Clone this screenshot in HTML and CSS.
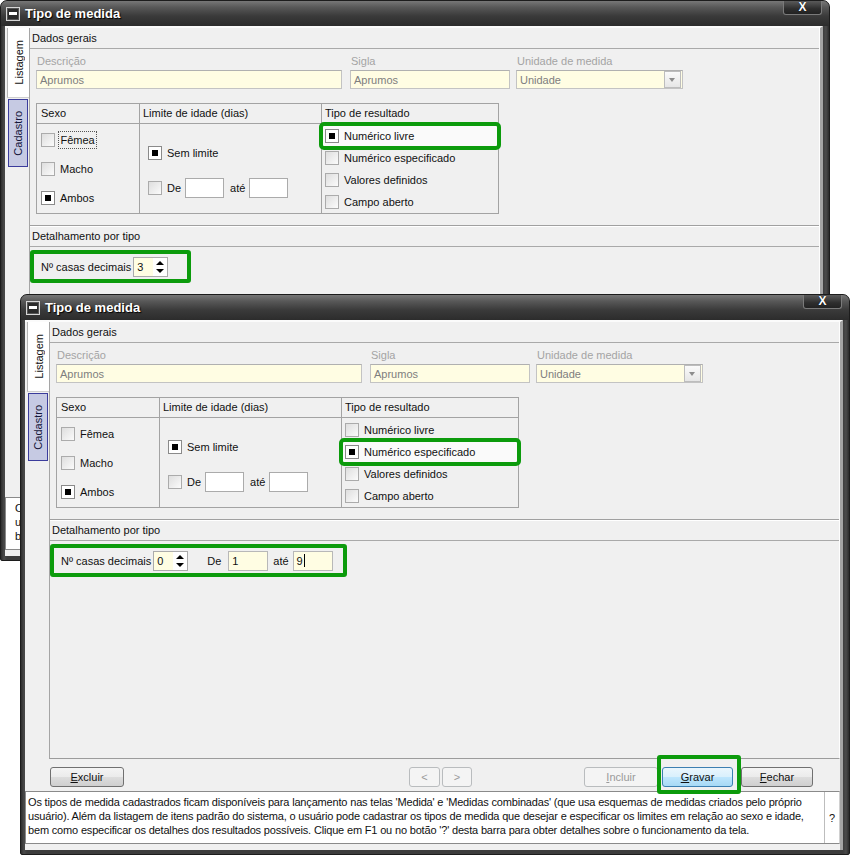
FILE: index.html
```html
<!DOCTYPE html>
<html lang="pt">
<head>
  <meta charset="UTF-8" />
  <title>Tipo de medida</title>
  <link rel="stylesheet" href="styles.css">
</head>
<body>
  <!-- janela de trás: Numérico livre -->
  <div class="win win--back">
    <div class="titlebar">
      <span class="sysbtn"></span>
      <span class="title">Tipo de medida</span>
      <span class="closebtn">X</span>
    </div>
    <div class="client">
      <div class="main">
        <div class="tabs">
          <div class="tab"><span>Listagem</span></div>
          <div class="tab tab--on"><span>Cadastro</span></div>
        </div>
        <div class="panel">
          <div class="sect-head">Dados gerais</div>
          <div class="fields">
            <div class="field field--desc"><span class="lbl">Descrição</span><span class="inp">Aprumos</span></div>
            <div class="field field--sigla"><span class="lbl">Sigla</span><span class="inp">Aprumos</span></div>
            <div class="field field--un"><span class="lbl">Unidade de medida</span><span class="inp">Unidade<i class="drop"></i></span></div>
          </div>
          <div class="group">
            <div class="gh">Sexo</div>
            <div class="gh">Limite de idade (dias)</div>
            <div class="gh gh--last">Tipo de resultado</div>
            <div class="gc gc--sexo">
              <div class="opt"><span class="cb"></span><span class="focus">Fêmea</span></div>
              <div class="opt"><span class="cb"></span>Macho</div>
              <div class="opt"><span class="cb cb--on"></span>Ambos</div>
            </div>
            <div class="gc gc--lim">
              <div class="opt"><span class="cb cb--on"></span>Sem limite</div>
              <div class="opt"><span class="cb"></span>De<span class="box"></span><span class="ate">até</span><span class="box"></span></div>
            </div>
            <div class="gc gc--tipo">
              <div class="opt mark-row"><span class="cb cb--on"></span>Numérico livre</div>
              <div class="opt"><span class="cb"></span>Numérico especificado</div>
              <div class="opt"><span class="cb"></span>Valores definidos</div>
              <div class="opt"><span class="cb"></span>Campo aberto</div>
            </div>
          </div>
          <div class="sect-head sect-head--sub">Detalhamento por tipo</div>
          <div class="detail">
            <div class="detail-box">
              <span>Nº casas decimais</span>
              <span class="spin"><span class="spin-val">3</span><span class="spin-btns"><i class="up"></i><i class="dn"></i></span></span>
            </div>
          </div>
        </div>
      </div>
      <div class="bar">
        <span class="btn btn--excluir"><u>E</u>xcluir</span>
        <span class="btn btn--nav btn--off">&lt;</span>
        <span class="btn btn--nav2 btn--off">&gt;</span>
        <span class="btn btn--incluir btn--off"><u>I</u>ncluir</span>
        <span class="btn btn--gravar btn--blue"><u>G</u>ravar</span>
        <span class="btn btn--fechar"><u>F</u>echar</span>
      </div>
      <div class="help">
        <p class="help-text">Os tipos de medida cadastrados ficam disponíveis para lançamento nas telas 'Medida' e 'Medidas combinadas' (que usa esquemas de medidas criados pelo próprio<br>usuário). Além da listagem de itens padrão do sistema, o usuário pode cadastrar os tipos de medida que desejar e especificar os limites em relação ao sexo e idade,<br>bem como especificar os detalhes dos resultados possíveis. Clique em F1 ou no botão '?' desta barra para obter detalhes sobre o funcionamento da tela.</p>
        <span class="help-q">?</span>
      </div>
    </div>
  </div>

  <!-- janela da frente: Numérico especificado -->
  <div class="win win--front">
    <div class="titlebar">
      <span class="sysbtn"></span>
      <span class="title">Tipo de medida</span>
      <span class="closebtn">X</span>
    </div>
    <div class="client">
      <div class="main">
        <div class="tabs">
          <div class="tab"><span>Listagem</span></div>
          <div class="tab tab--on"><span>Cadastro</span></div>
        </div>
        <div class="panel">
          <div class="sect-head">Dados gerais</div>
          <div class="fields">
            <div class="field field--desc"><span class="lbl">Descrição</span><span class="inp">Aprumos</span></div>
            <div class="field field--sigla"><span class="lbl">Sigla</span><span class="inp">Aprumos</span></div>
            <div class="field field--un"><span class="lbl">Unidade de medida</span><span class="inp">Unidade<i class="drop"></i></span></div>
          </div>
          <div class="group">
            <div class="gh">Sexo</div>
            <div class="gh">Limite de idade (dias)</div>
            <div class="gh gh--last">Tipo de resultado</div>
            <div class="gc gc--sexo">
              <div class="opt"><span class="cb"></span>Fêmea</div>
              <div class="opt"><span class="cb"></span>Macho</div>
              <div class="opt"><span class="cb cb--on"></span>Ambos</div>
            </div>
            <div class="gc gc--lim">
              <div class="opt"><span class="cb cb--on"></span>Sem limite</div>
              <div class="opt"><span class="cb"></span>De<span class="box"></span><span class="ate">até</span><span class="box"></span></div>
            </div>
            <div class="gc gc--tipo">
              <div class="opt"><span class="cb"></span>Numérico livre</div>
              <div class="opt mark-row"><span class="cb cb--on"></span>Numérico especificado</div>
              <div class="opt"><span class="cb"></span>Valores definidos</div>
              <div class="opt"><span class="cb"></span>Campo aberto</div>
            </div>
          </div>
          <div class="sect-head sect-head--sub">Detalhamento por tipo</div>
          <div class="detail">
            <div class="detail-box detail-box--range">
              <span>Nº casas decimais</span>
              <span class="spin"><span class="spin-val">0</span><span class="spin-btns"><i class="up"></i><i class="dn"></i></span></span>
              <span class="d-de">De</span>
              <span class="yel">1</span>
              <span class="d-ate">até</span>
              <span class="yel">9<i class="caret"></i></span>
            </div>
          </div>
        </div>
      </div>
      <div class="bar">
        <span class="btn btn--excluir"><u>E</u>xcluir</span>
        <span class="btn btn--nav btn--off">&lt;</span>
        <span class="btn btn--nav2 btn--off">&gt;</span>
        <span class="btn btn--incluir btn--off"><u>I</u>ncluir</span>
        <span class="btn btn--gravar btn--blue"><u>G</u>ravar</span>
        <span class="btn btn--fechar"><u>F</u>echar</span>
        <span class="mark-btn"></span>
      </div>
      <div class="help">
        <p class="help-text">Os tipos de medida cadastrados ficam disponíveis para lançamento nas telas 'Medida' e 'Medidas combinadas' (que usa esquemas de medidas criados pelo próprio<br>usuário). Além da listagem de itens padrão do sistema, o usuário pode cadastrar os tipos de medida que desejar e especificar os limites em relação ao sexo e idade,<br>bem como especificar os detalhes dos resultados possíveis. Clique em F1 ou no botão '?' desta barra para obter detalhes sobre o funcionamento da tela.</p>
        <span class="help-q">?</span>
      </div>
    </div>
  </div>
</body>
</html>
```

FILE: styles.css
```css
*{margin:0;padding:0;box-sizing:border-box;}
body{
  width:850px;height:855px;position:relative;overflow:hidden;
  background:#fff;
  font-family:"Liberation Sans",Arial,sans-serif;font-size:11px;color:#111;
}

/* janelas (posição livre na "área de trabalho") */
.win{
  position:absolute;width:830px;height:561px;
  display:flex;flex-direction:column;
  background:linear-gradient(90deg,#2e2e2e,#4a4a4a 3px,#3c3c3c 6px,#3c3c3c calc(100% - 6px),#4a4a4a calc(100% - 3px),#2a2a2a);
  border:1px solid #1c1c1c;border-radius:7px 7px 2px 2px;
}
.win--back{left:0;top:0;}
.win--front{left:20px;top:294px;}

.titlebar{
  height:25px;display:flex;align-items:center;padding:0 7px 0 5px;
  background:linear-gradient(#777 0%,#585858 25%,#3a3a3a 60%,#2c2c2c 100%);
  border-radius:6px 6px 0 0;
}
.sysbtn{
  width:14px;height:14px;margin-top:1px;position:relative;
  background:#2a2a2a;border:1px solid #d6d6d6;box-shadow:inset 0 0 0 1px #555;
}
.sysbtn::after{
  content:"";position:absolute;left:2px;top:4px;width:8px;height:3px;background:#fff;
}
.title{
  margin-left:5px;color:#fff;font-weight:bold;font-size:13px;
  text-shadow:1px 1px 1px #000;
}
.closebtn{
  margin-left:auto;align-self:flex-start;
  width:39px;height:14px;line-height:13px;text-align:center;
  color:#fff;font-weight:bold;font-size:12px;text-shadow:0 0 1px #000;
  background:linear-gradient(#5a5a5a,#2e2e2e 60%,#222);
  border:1px solid #7a7a7a;border-top:none;border-radius:0 0 3px 3px;
}

.client{
  flex:1;margin:0 6px 4px 4px;
  background:#f0f0f0;border-top:2px solid #fbfbfb;border-right:3px solid #a3a3a3;
  display:flex;flex-direction:column;
}
.main{height:437px;display:flex;}

/* abas verticais */
.tabs{width:24px;}
.tab{
  height:70px;margin-left:2px;background:#fff;
  border-left:1px solid #b4b4b4;border-bottom:1px solid #cfcfcf;
  display:flex;align-items:center;justify-content:center;
}
.tab span{writing-mode:vertical-rl;transform:rotate(180deg);}
.tab--on{
  height:68px;margin:1px 1px 0 3px;background:#c6cae3;
  border:1px solid #3b3c9c;color:#15163a;
}

.panel{
  flex:1;border-left:1px solid #a5a5a5;border-bottom:1px solid #9c9c9c;
  border-right:1px solid #fdfdfd;
}
.sect-head{
  height:21px;line-height:20px;padding-left:2px;
  border-bottom:1px solid #a9a9a9;
}
.sect-head--sub{
  height:22px;margin-top:11px;
  border-top:1px solid #a0a0a0;box-shadow:inset 0 1px 0 #fff;
}

/* dados gerais */
.fields{display:flex;padding:6px 0 0 6px;}
.field--desc{width:306px;}
.field--sigla{width:160px;margin-left:8px;}
.field--un{width:167px;margin-left:6px;}
.lbl{display:block;height:13px;line-height:13px;padding-left:1px;margin-bottom:2px;color:#a4a4a4;}
.inp{
  display:flex;align-items:center;height:19px;padding-left:3px;
  background:#fffde3;color:#7e7e7e;
  border:1px solid #c3c3c3;border-top-color:#b0b0b0;
}
.drop{
  margin-left:auto;margin-right:1px;width:17px;height:17px;position:relative;
  background:linear-gradient(#fafafa,#e6e6e6);border:1px solid #bdbdbd;
}
.drop::after{
  content:"";position:absolute;left:4px;top:6px;
  border-left:3px solid transparent;border-right:3px solid transparent;border-top:4px solid #8c8c8c;
}

/* quadro sexo / idade / resultado */
.group{
  display:grid;grid-template-columns:103px 182px 1fr;grid-template-rows:20px 89px;
  width:463px;margin:14px 0 0 6px;border:1px solid #a3a3a3;
}
.gh{line-height:19px;padding-left:3px;border-bottom:1px solid #a3a3a3;border-right:1px solid #a3a3a3;}
.gh:first-child{padding-left:4px;}
.gh--last{border-right:none;}
.gc{border-right:1px solid #a3a3a3;}
.gc--tipo{border-right:none;padding-top:1px;}
.gc--sexo{padding:1px 0 0 4px;}
.gc--lim{padding:19px 0 0 8px;display:flex;flex-direction:column;gap:14.5px;}

.opt{display:flex;align-items:center;}
.gc--sexo .opt{height:29px;}
.gc--lim .opt{height:20px;}
.gc--tipo .opt{height:22px;padding-left:3px;}

.cb{
  width:14px;height:14px;margin-right:5px;flex:none;
  border:1px solid #ababab;background:linear-gradient(135deg,#dedede,#fbfbfb);
}
.cb--on{background:#fff;border-color:#8a8a8a;padding:3px;}
.cb--on::after{content:"";display:block;width:6px;height:6px;background:#000;}
.focus{margin-left:-2px;padding:1px 1.5px;line-height:14px;border:1px dotted #555;}

.box{width:39px;height:20px;margin-left:4px;background:#fff;border:1px solid #ababab;}
.ate{margin-left:6px;}

.mark-row{outline:4px solid #0c9b0c;outline-offset:-1.5px;border-radius:2px;background:#fafafa;}

/* detalhamento */
.detail{padding-top:3px;}
.detail-box{
  display:flex;align-items:center;width:161px;height:33px;padding-left:7px;
  border:4px solid #0c9b0c;border-radius:3px;
}
.detail-box--range{width:297px;}
.spin{
  display:flex;width:35px;height:20px;margin-left:2px;
  background:#fffde3;border:1px solid #ababab;
}
.spin-val{flex:1;padding-left:3px;line-height:18px;}
.spin-btns{
  width:14px;background:#fff;display:flex;flex-direction:column;
  align-items:center;justify-content:center;gap:4px;
}
.up{border-left:4px solid transparent;border-right:4px solid transparent;border-bottom:4px solid #000;}
.dn{border-left:4px solid transparent;border-right:4px solid transparent;border-top:4px solid #000;}
.d-de{margin-left:19px;}
.yel{
  display:flex;align-items:center;width:40px;height:20px;margin-left:7px;padding-left:3px;
  background:#fffde3;border:1px solid #b8b8b8;
}
.d-ate{margin-left:5px;}
.d-ate + .yel{margin-left:4px;}
.caret{display:inline-block;width:1px;height:13px;margin-left:1px;background:#000;}

/* barra de botões */
.bar{height:32px;display:flex;align-items:flex-start;padding:8px 27px 0 25px;position:relative;}
.btn{
  height:20px;line-height:18px;text-align:center;color:#111;
  border:1px solid #707070;border-radius:3px;
  background:linear-gradient(#f4f4f4 0%,#ebebeb 50%,#dddddd 51%,#cfcfcf 100%);
}
.btn--excluir{width:74px;}
.btn--nav{width:31px;margin-left:285px;}
.btn--nav2{width:30px;margin-left:2px;}
.btn--incluir{width:74px;margin-left:auto;}
.btn--gravar{width:71px;margin-left:4px;}
.btn--fechar{width:72px;margin-left:8px;}
.btn--off{background:#f4f4f4;border-color:#b9bcbe;color:#9a9a9a;}
.btn--blue{
  border-color:#3c7fb1;
  background:linear-gradient(#eaf6fd 0%,#d9f0fc 50%,#bee6fd 51%,#a7d9f5 100%);
}
.mark-btn{
  position:absolute;left:632px;top:-4px;width:84px;height:39px;
  border:4px solid #0c9b0c;border-radius:3px;
}

/* texto de ajuda */
.help{display:flex;height:53px;background:#fff;border:1px solid #8a8a8a;border-right-color:#d0d0d0;}
.help-text{
  flex:1;padding:3px 0 0 2px;line-height:14px;letter-spacing:-0.17px;
  white-space:nowrap;overflow:hidden;
}
.win--back .help-text{padding-left:9px;}
.help-q{width:15px;border-left:1px solid #bdbdbd;display:flex;align-items:center;justify-content:center;}
```
